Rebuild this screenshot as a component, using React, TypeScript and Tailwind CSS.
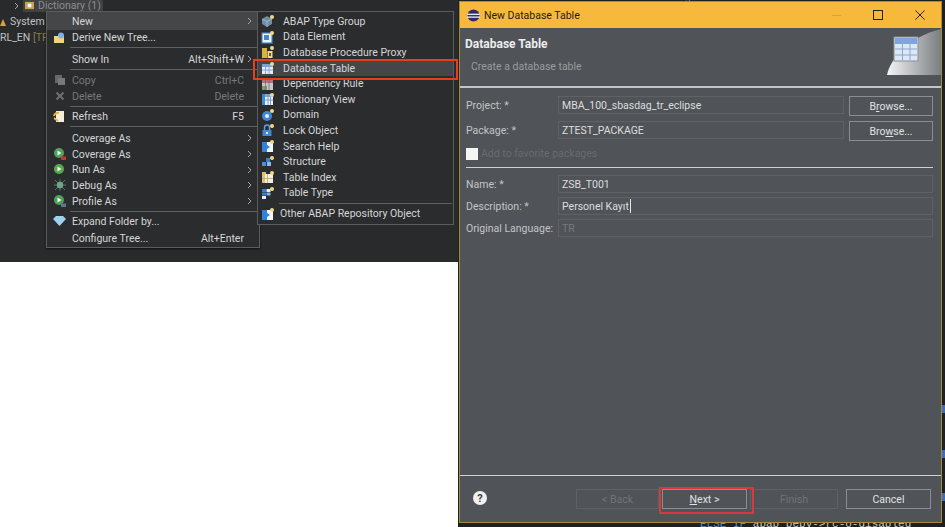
import { ReactNode } from "react";

const font = { fontFamily: 'Roboto, "Noto Sans", sans-serif' };
const star = <circle cx="11" cy="3" r="2" fill="#f3d88a" />;

// small repository object icons of the New submenu
const icons: Record<string, ReactNode> = {
  "ABAP Type Group": (
    <>
      <path d="M6 2l5 3v5l-5 3-5-3V5z" fill="#6e8ea6" />
      <path d="M6 7.500L1 5M6 7.500l5-2.500M6 7.500V13" stroke="#a9bfcd" strokeWidth="0.800" />
      {star}
    </>
  ),
  "Data Element": (
    <>
      <rect x="1" y="3" width="10" height="10" fill="#f1f6fb" stroke="#3f88d4" strokeWidth="1.200" />
      <rect x="3" y="5" width="5" height="5" fill="#3f88d4" />
      {star}
    </>
  ),
  "Database Procedure Proxy": (
    <>
      <rect x="1" y="3" width="5" height="10" fill="#d9b23f" />
      <rect x="6.500" y="6" width="5" height="7" fill="#f0d886" />
      <rect x="8" y="8" width="2" height="3" fill="#5c5a4d" />
      {star}
    </>
  ),
  "Database Table": (
    <>
      <rect x="1" y="3" width="11" height="10" fill="#e3ecfa" />
      <rect x="1" y="3" width="11" height="3" fill="#7aa1e0" />
      <path d="M4.500 3v10M8 3v10M1 9h11" stroke="#7e98c4" strokeWidth="0.800" />
      {star}
    </>
  ),
  "Dependency Rule": (
    <>
      <rect x="1" y="3" width="11" height="10" fill="#c8c4cc" />
      <rect x="1" y="3" width="11" height="3" fill="#c46a72" />
      <rect x="1" y="9" width="5" height="4" fill="#7aa060" />
      <path d="M4.500 3v10M8 3v10" stroke="#6f6d78" strokeWidth="0.800" />
    </>
  ),
  "Dictionary View": (
    <>
      <rect x="1" y="2" width="11" height="11" fill="#e9f1fb" />
      <rect x="1" y="2" width="3" height="11" fill="#3f88d4" />
      <rect x="4" y="2" width="8" height="3" fill="#7aa9e2" />
      <path d="M7 2v11M9.500 2v11M1 8h11" stroke="#5e90c8" strokeWidth="0.800" />
      {star}
    </>
  ),
  Domain: (
    <>
      <circle cx="6" cy="8" r="5" fill="#3f88d4" />
      <circle cx="6" cy="8" r="2" fill="#e8f1fb" />
      {star}
    </>
  ),
  "Lock Object": (
    <>
      <path d="M3.500 7V4.500a2.500 2.500 0 0 1 5 0V7" fill="none" stroke="#5d9ee0" strokeWidth="1.500" />
      <rect x="1.500" y="7" width="9" height="6" fill="#3f88d4" />
      <rect x="5" y="9" width="2" height="2" fill="#e8f1fb" />
      {star}
    </>
  ),
  "Search Help": (
    <>
      <rect x="1" y="3" width="11" height="10" fill="#f1f6fb" />
      <rect x="1" y="3" width="5" height="10" fill="#2f83da" />
      <path d="M6 6l3 2-3 2z" fill="#2f83da" />
      {star}
    </>
  ),
  Structure: (
    <>
      <rect x="1" y="7" width="4" height="4" fill="#4a90dc" />
      <rect x="6" y="7" width="4" height="4" fill="#8fb9e8" />
      <rect x="5" y="3" width="4" height="4" fill="#3f7fc6" />
      {star}
    </>
  ),
  "Table Index": (
    <>
      <rect x="1" y="4" width="11" height="9" fill="#f2efe2" />
      <rect x="1" y="4" width="3" height="9" fill="#dcc172" />
      <path d="M6.500 4v9M1 8.500h11" stroke="#bba768" strokeWidth="0.800" />
      <path d="M1 2h4v2H1z" fill="#dcc172" />
      {star}
    </>
  ),
  "Table Type": (
    <>
      <rect x="1" y="3" width="4" height="3" fill="#2f83da" />
      <rect x="5.500" y="3" width="4" height="3" fill="#e8f1fb" />
      <rect x="1" y="6.500" width="4" height="3" fill="#2f83da" />
      <rect x="5.500" y="6.500" width="4" height="3" fill="#7fb0e6" />
      <rect x="1" y="10" width="4" height="3" fill="#e8f1fb" />
      {star}
    </>
  ),
};

function ObjIcon({ name }: { name: string }) {
  return (
    <svg width="14" height="14" viewBox="0 0 14 14">
      {icons[name] ?? icons["Search Help"]}
    </svg>
  );
}

function Ball({ c, dot }: { c: string; dot?: string }) {
  return (
    <svg width="14" height="14" viewBox="0 0 14 14">
      <circle cx="6" cy="6" r="5" fill={c} />
      <path d="M4.500 3.500l4 2.500-4 2.500z" fill="#f4f8f2" />
      {dot ? <rect x="8" y="9.500" width="5" height="3.500" fill={dot} /> : null}
    </svg>
  );
}

function Chevron() {
  return (
    <svg width="6" height="8" viewBox="0 0 6 8" className="ml-[1px]">
      <path d="M1 1l3 3-3 3" fill="none" stroke="#a4a6a8" strokeWidth="1" />
    </svg>
  );
}

function MenuRow({ h = 16, icon, label, right, arrow, off, active }: { h?: number; icon?: ReactNode; label: string; right?: string; arrow?: boolean; off?: boolean; active?: boolean }) {
  return (
    <div className={`flex items-center ${active ? "bg-[#444648]" : ""} ${off ? "text-[#77797b]" : "text-[#d4d6d8]"}`} style={{ height: h }}>
      <div className="flex w-[25px] justify-center">{icon}</div>
      <span className="flex-1 whitespace-nowrap">{label}</span>
      {right ? <span className="whitespace-nowrap">{right}</span> : null}
      <span className="mr-[3px] w-[12px] pl-[2px]">{arrow ? <Chevron /> : null}</span>
    </div>
  );
}

function Sep({ mt = 2, mb = 2 }: { mt?: number; mb?: number }) {
  return <div className="ml-[23px] h-[1px] bg-[#5e6062]" style={{ marginTop: mt, marginBottom: mb }} />;
}

function ContextMenu() {
  return (
    <div className="absolute top-[11px] left-[46px] w-[214px] border border-[#5a5c5e] bg-[#2b2c2d] text-[10.500px] leading-[13px] shadow-[0_1px_2px_#111]">
      <MenuRow h={18} label="New" arrow active />
      <MenuRow h={15} label="Derive New Tree..." icon={<svg width="13" height="12" viewBox="0 0 13 12"><rect x="1" y="4" width="10" height="7" fill="#f2d27a" /><circle cx="8" cy="3.500" r="3" fill="#7fb2e5" /></svg>} />
      <Sep mb={3} />
      <MenuRow label="Show In" right="Alt+Shift+W" arrow />
      <Sep />
      <MenuRow label="Copy" right="Ctrl+C" off icon={<svg width="12" height="12" viewBox="0 0 12 12"><rect x="1" y="1" width="7" height="8" fill="#66686a" /><rect x="4" y="4" width="7" height="7" fill="#77797b" /></svg>} />
      <MenuRow label="Delete" right="Delete" off icon={<svg width="10" height="10" viewBox="0 0 10 10"><path d="M1.500 1.500l7 7M8.500 1.500l-7 7" stroke="#6d6f71" strokeWidth="2" /></svg>} />
      <Sep mb={1} />
      <MenuRow label="Refresh" right="F5" icon={<svg width="13" height="13" viewBox="0 0 13 13"><rect x="3" y="1" width="8" height="11" fill="#f4efdc" /><path d="M1 6a4 4 0 0 1 5-3M1 8l4 3" stroke="#e3b53c" strokeWidth="2" fill="none" /></svg>} />
      <Sep mb={3} />
      <MenuRow label="Coverage As" arrow />
      <MenuRow label="Coverage As" arrow icon={<Ball c="#4fa15a" dot="#c0392b" />} />
      <MenuRow h={15} label="Run As" arrow icon={<Ball c="#56a84f" />} />
      <MenuRow label="Debug As" arrow icon={<svg width="14" height="14" viewBox="0 0 14 14"><path d="M2 2l10 10M12 2L2 12M7 1v12M1 7h12" stroke="#4f7a68" strokeWidth="1" /><circle cx="7" cy="7" r="3.200" fill="#6fa58e" /></svg>} />
      <MenuRow label="Profile As" arrow icon={<Ball c="#4fa15a" dot="#5e7690" />} />
      <Sep mb={1} />
      <MenuRow label="Expand Folder by..." icon={<svg width="13" height="10" viewBox="0 0 13 10"><path d="M3 0h7l3 3-6.500 7L0 3z" fill="#9fd0ee" /></svg>} />
      <MenuRow h={18} label="Configure Tree..." right="Alt+Enter" />
    </div>
  );
}

const newItems = ["ABAP Type Group", "Data Element", "Database Procedure Proxy", "Database Table", "Dependency Rule", "Dictionary View", "Domain", "Lock Object", "Search Help", "Structure", "Table Index", "Table Type"];

function NewMenu() {
  return (
    <div className="absolute top-[11px] left-[257px] w-[197px] border border-[#5a5c5e] bg-[#2b2c2d] text-[10.500px] leading-[13px] text-[#d4d6d8]">
      <div className="pt-[1.500px]">
        {newItems.map((label, i) => (
          <div key={label} className={`flex h-[15.600px] items-center pl-[3px] ${i === 3 ? "bg-[#444648]" : ""}`}>
            <div className="w-[22px]"><ObjIcon name={label} /></div>
            <span className="whitespace-nowrap">{label}</span>
          </div>
        ))}
      </div>
      <div className="mt-[2px] mr-[1px] ml-[21px] h-[1px] bg-[#5e6062]" />
      <div className="flex h-[20px] items-center pl-[3px]">
        <div className="w-[19px]"><ObjIcon name="Search Help" /></div>
        <span className="whitespace-nowrap">Other ABAP Repository Object</span>
      </div>
    </div>
  );
}

function TreeArea() {
  return (
    <div className="relative h-[262px] w-[458px] shrink-0 overflow-hidden bg-[#292a2b] text-[10.500px] leading-[13px] text-[#c0c2c4]">
      <div className="flex h-[11px] items-center">
        <span className="mr-[3px] ml-[13px]"><Chevron /></span>
        <div className="flex h-[12px] items-center gap-[4px] bg-[#3f4143] px-[2px] text-[#8b8d8f]">
          <svg width="9" height="9" viewBox="0 0 10 10"><rect y="1" width="10" height="8" fill="#cfa04a" /><rect x="3" y="3" width="4" height="4" fill="#fff" /></svg>
          <span>Dictionary (1)</span>
        </div>
      </div>
      <div className="mt-[4px] flex h-[13px] items-center gap-[4px]">
        <svg width="6" height="10" viewBox="0 0 6 10"><path d="M0 9l3-7 3 7z" fill="#d9a53a" /></svg>
        <span>System</span>
      </div>
      <div className="mt-[3px] whitespace-nowrap">RL_EN <span className="text-[#8f7a45]">[TR</span></div>
      <ContextMenu />
      <NewMenu />
      <div className="absolute top-[59px] left-[253px] h-[21px] w-[205px] border-2 border-[#e5401d]" />
    </div>
  );
}

function Field({ label, value, off, caret }: { label: string; value: string; off?: boolean; caret?: boolean }) {
  return (
    <div className="flex h-[18px] items-center">
      <span className="w-[92px] whitespace-nowrap text-[#c3c5c7]">{label}</span>
      <div className={`flex h-[18px] flex-1 items-center border border-[#5f6265] pl-[3px] ${off ? "text-[#777a7d]" : "text-[#dcdedf]"}`}>
        {value}
        {caret ? <span className="ml-[1px] h-[14px] w-[1px] bg-[#e4e6e8]" /> : null}
      </div>
    </div>
  );
}

function Btn({ children, off, w }: { children: ReactNode; off?: boolean; w: number }) {
  return (
    <div className={`flex h-[20px] items-center justify-center border ${off ? "border-[#5f6265] text-[#707376]" : "border-[#8b8e90] text-[#e0e2e3]"}`} style={{ width: w }}>
      {children}
    </div>
  );
}

function Dialog() {
  return (
    <div className="relative z-10 flex h-[522px] w-[483px] flex-col border border-[#a88a3f] bg-[#505357] text-[10.500px] leading-[13px]">
      <div className="flex h-[26px] shrink-0 items-center bg-[#f6b93c] pl-[7px] text-[#1c1c1c]">
        <svg width="13" height="13" viewBox="0 0 14 14" className="mr-[4px]">
          <circle cx="7" cy="7" r="6.500" fill="#2f2a6b" />
          <rect x="0" y="5" width="14" height="1.500" fill="#e7e5ee" />
          <rect x="0" y="8" width="14" height="1.500" fill="#e7e5ee" />
        </svg>
        <span className="flex-1">New Database Table</span>
        <span className="h-[1px] w-[9px] bg-[#d8a53a]" />
        <span className="ml-[32px] h-[10px] w-[10px] border border-[#222]" />
        <svg width="10" height="10" viewBox="0 0 10 10" className="mr-[16px] ml-[32px]">
          <path d="M0.500 0.500l9 9M9.500 0.500l-9 9" stroke="#222" strokeWidth="1" />
        </svg>
      </div>

      <div className="relative h-[60px] shrink-0 overflow-hidden border-b-2 border-[#c3c6c6]">
        <div className="pt-[9px] pl-[5px] text-[12px] leading-[14px] font-bold text-[#ecedee]">Database Table</div>
        <div className="pt-[9px] pl-[11px] text-[#9a9da0]">Create a database table</div>
        <svg width="54" height="46" viewBox="0 0 54 46" className="absolute top-[1px] right-0">
          <defs>
            <linearGradient id="dome" x1="0" x2="1">
              <stop offset="0" stopColor="#f4f5f6" />
              <stop offset="1" stopColor="#7a7d81" />
            </linearGradient>
          </defs>
          <path d="M0 46C3 30 22 8 54 0V46z" fill="url(#dome)" />
          <rect x="7" y="8" width="24" height="24" fill="#dbe8fa" stroke="#8a8d90" />
          <rect x="8" y="9" width="22" height="6" fill="#7ea4e4" />
          <path d="M15.500 9v22M23 9v22M8 20h22M8 26h22" stroke="#90a6c6" strokeWidth="1" />
        </svg>
      </div>

      <div className="flex flex-1 flex-col px-[6px] pt-[8px]">
        <div className="flex flex-col gap-[5px] pr-[2px]">
          <div className="flex gap-[5px]">
            <div className="flex-1"><Field label="Project: *" value="MBA_100_sbasdag_tr_eclipse" /></div>
            <Btn w={84}><span>B<span className="underline">r</span>owse...</span></Btn>
          </div>
          <div className="flex gap-[5px]">
            <div className="flex-1"><Field label="Package: *" value="ZTEST_PACKAGE" /></div>
            <Btn w={84}><span>Bro<span className="underline">w</span>se...</span></Btn>
          </div>
        </div>
        <div className="mt-[6px] flex h-[13px] items-center gap-[3px] text-[#686b6e]">
          <span className="h-[12px] w-[12px] bg-[#f5f5f5]" />
          Add to favorite packages
        </div>
        <div className="mt-[7px] mr-[2px] h-[1px] bg-[#d0d2d2]" />
        <div className="mt-[7px] flex flex-col gap-[4px] pr-[2px]">
          <Field label="Name: *" value="ZSB_T001" />
          <Field label="Description: *" value="Personel Kayıt" caret />
          <Field label="Original Language:" value="TR" off />
        </div>
      </div>

      <div className="h-[1px] shrink-0 bg-[#d0d2d2]" />
      <div className="flex h-[46px] shrink-0 items-start pt-[13px]">
        <div className="mt-[2px] ml-[13px] flex h-[14px] w-[14px] items-center justify-center rounded-full bg-[#f2f2f2] text-[11px] font-bold text-[#3c3e40]">?</div>
        <div className="ml-[89px] flex items-center">
          <Btn w={83} off>&lt; Back</Btn>
          <div className="relative mx-[3px]">
            <Btn w={85}><span><span className="underline">N</span>ext &gt;</span></Btn>
            <div className="absolute -top-[2px] -right-[7px] -bottom-[5px] -left-[3px] border-2 border-[#d9393c]" />
          </div>
          <Btn w={88} off>Finish</Btn>
          <div className="w-[8px]" />
          <Btn w={85}>Cancel</Btn>
        </div>
      </div>
    </div>
  );
}

// editor text that shows behind the dialog on its edges
function EditorBehind() {
  return (
    <div style={{ fontFamily: '"Liberation Mono", monospace' }} className="text-[11px] leading-none">
      <div className="absolute top-[-8px] left-[64px] whitespace-nowrap text-[#8b8d8f]">Identi</div>
      <div className="absolute top-[-8px] left-[154px] whitespace-nowrap text-[#5f93c9]">Line 7: Length 7 va</div>
      <div className="absolute top-[-8px] left-[299px] whitespace-nowrap text-[#4f9a5a]">' '</div>
      <div className="absolute top-[405px] left-[484px] h-[8px] w-[3px] bg-[#3f6fae]" />
      <div className="absolute top-[450px] left-[484px] h-[8px] w-[3px] bg-[#3f6fae]" />
      <div className="absolute top-[493px] left-[484px] h-[8px] w-[3px] bg-[#3f6fae]" />
      <div className="absolute bottom-[-3px] left-[242px] whitespace-nowrap text-[#c6c8ca]">
        <span className="text-[#5f93c9]">ELSE IF</span> abap_bepv-&gt;rc-o-disabled
      </div>
    </div>
  );
}

export default function App() {
  return (
    <div className="flex h-[527px] w-[945px] overflow-hidden bg-white" style={font}>
      <TreeArea />
      <div className="relative flex-1 overflow-hidden bg-[#1f2021] pt-[1px] pl-[1px]">
        <EditorBehind />
        <Dialog />
      </div>
    </div>
  );
}
